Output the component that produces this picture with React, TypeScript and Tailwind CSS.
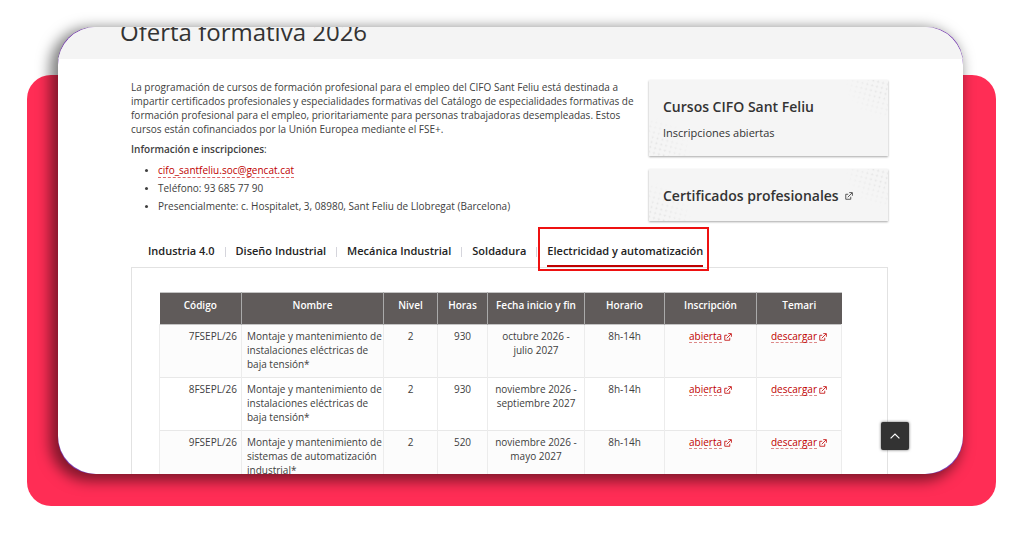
import type { ReactNode } from 'react';

type Course = {
  code: string;
  name: string;
  level: string;
  hours: string;
  dates: string;
  schedule: string;
};

const tabs = [
  'Industria 4.0',
  'Diseño Industrial',
  'Mecánica Industrial',
  'Soldadura',
  'Electricidad y automatización',
];

const columns = [
  { label: 'Código', width: 'w-[82px]' },
  { label: 'Nombre', width: 'w-[142px]' },
  { label: 'Nivel', width: 'w-[54px]' },
  { label: 'Horas', width: 'w-[50px]' },
  { label: 'Fecha inicio y fin', width: 'w-[97px]' },
  { label: 'Horario', width: 'w-[80px]' },
  { label: 'Inscripción', width: 'w-[92px]' },
  { label: 'Temari', width: 'w-[85px]' },
];

const courses: Course[] = [
  {
    code: '7FSEPL/26',
    name: 'Montaje y mantenimiento de instalaciones eléctricas de baja tensión*',
    level: '2',
    hours: '930',
    dates: 'octubre 2026 - julio 2027',
    schedule: '8h-14h',
  },
  {
    code: '8FSEPL/26',
    name: 'Montaje y mantenimiento de instalaciones eléctricas de baja tensión*',
    level: '2',
    hours: '930',
    dates: 'noviembre 2026 - septiembre 2027',
    schedule: '8h-14h',
  },
  {
    code: '9FSEPL/26',
    name: 'Montaje y mantenimiento de sistemas de automatización industrial*',
    level: '2',
    hours: '520',
    dates: 'noviembre 2026 - mayo 2027',
    schedule: '8h-14h',
  },
];

function ExternalIcon({ className }: { className: string }) {
  return (
    <svg
      aria-hidden
      viewBox="0 0 16 16"
      className={className}
      fill="none"
      stroke="currentColor"
      strokeWidth="1.6"
    >
      <path d="M6.5 4.5h-5v10h10v-5" />
      <path d="M5.5 10.5 14 2M8.5 1.2h6.3v6.3" />
    </svg>
  );
}

// Halftone dots fading out of a corner
function Dots({ id, className }: { id: string; className: string }) {
  return (
    <svg aria-hidden viewBox="0 0 48 44" className={className}>
      <defs>
        <pattern
          id={id}
          width="5"
          height="5"
          patternUnits="userSpaceOnUse"
          patternTransform="rotate(14)"
        >
          <circle cx="2.5" cy="2.5" r="0.9" fill="#e2e2e2" />
        </pattern>
        <radialGradient id={`${id}-fade`} cx="1" cy="0" r="1">
          <stop offset="0.3" stopColor="#fff" />
          <stop offset="0.9" stopColor="#000" />
        </radialGradient>
        <mask id={`${id}-mask`}>
          <rect width="48" height="44" fill={`url(#${id}-fade)`} />
        </mask>
      </defs>
      <rect width="48" height="44" fill={`url(#${id})`} mask={`url(#${id}-mask)`} />
    </svg>
  );
}

function SideCard({ id, children }: { id: string; children: ReactNode }) {
  return (
    <div className="relative overflow-hidden bg-[#f5f5f5] px-3.5 pt-[17px] pb-[15px] shadow-[0_1px_2px_rgba(0,0,0,0.35)]">
      <Dots id={`${id}-a`} className="absolute top-0 right-0 h-11 w-12" />
      <Dots id={`${id}-b`} className="absolute bottom-0 left-0 h-11 w-12 rotate-180" />
      <div className="relative">{children}</div>
    </div>
  );
}

function RowLink({ label }: { label: string }) {
  return (
    <a href="#" className="inline-flex items-center gap-0.5 text-[#c00000]">
      <span className="border-b border-dashed border-[#d88] leading-3">{label}</span>
      <ExternalIcon className="size-2" />
    </a>
  );
}

export default function App() {
  return (
    <div className="min-h-screen bg-white pt-[75px] pr-7 pb-[30px] pl-[27px] font-['Open_Sans','Noto_Sans',sans-serif] text-[#333]">
      <div className="flex flex-col rounded-3xl bg-[#ff2d55] pr-[33px] pb-8 pl-[31px]">
        <div className="relative -mt-12 rounded-[36px] bg-[#7b3fb5] shadow-[-5px_4px_14px_3px_rgba(0,0,0,0.5)]">
          <main className="h-[calc(100vh-89px)] overflow-hidden rounded-[38px] bg-white">
            <header className="flex h-8 items-end bg-[#f4f4f4] px-[62px] pb-[11px]">
              <h1 className="text-[24px] leading-8">Oferta formativa 2026</h1>
            </header>

            <div className="pr-[75px] pl-[73px]">
              <div className="flex items-start justify-between pt-[21px]">
                <div className="w-[505px] text-[10px] leading-[14px] text-[#404040]">
                  <p>
                    La programación de cursos de formación profesional para el empleo del CIFO
                    Sant Feliu está destinada a impartir certificados profesionales y
                    especialidades formativas del Catálogo de especialidades formativas de
                    formación profesional para el empleo, prioritariamente para personas
                    trabajadoras desempleadas. Estos cursos están cofinanciados por la Unión
                    Europea mediante el FSE+.
                  </p>
                  <p className="mt-1.5">
                    <strong className="font-semibold">Información e inscripciones</strong>:
                  </p>
                  <ul className="mt-[5px] list-disc pl-[27px] leading-[18px] marker:text-[8px]">
                    <li>
                      <a
                        href="mailto:cifo_santfeliu.soc@gencat.cat"
                        className="border-b border-dashed border-[#d66] text-[#c00000]"
                      >
                        cifo_santfeliu.soc@gencat.cat
                      </a>
                    </li>
                    <li>Teléfono: 93 685 77 90</li>
                    <li>Presencialmente: c. Hospitalet, 3, 08980, Sant Feliu de Llobregat (Barcelona)</li>
                  </ul>
                </div>

                <aside className="flex w-[239px] shrink-0 flex-col gap-[13px]">
                  <SideCard id="cursos">
                    <h2 className="text-[14px] leading-5 font-semibold">Cursos CIFO Sant Feliu</h2>
                    <p className="mt-2 text-[11px] leading-4">Inscripciones abiertas</p>
                  </SideCard>
                  <SideCard id="certificados">
                    <h2 className="flex items-center gap-1.5 text-[14px] leading-5 font-semibold">
                      Certificados profesionales
                      <ExternalIcon className="size-2" />
                    </h2>
                  </SideCard>
                </aside>
              </div>

              <div className="mt-3.5 flex pl-[7px]" role="tablist">
                {tabs.map((tab, i) => {
                  const active = i === tabs.length - 1;
                  return (
                    <div key={tab} className="relative flex items-start">
                      {i > 0 && <span className="mt-3 h-2.5 w-px bg-[#d5d5dc]" />}
                      <button
                        type="button"
                        role="tab"
                        aria-selected={active}
                        className="px-2.5 text-[11px] font-semibold text-[#222]"
                      >
                        <span
                          className={
                            active
                              ? 'block border-b-2 border-[#c00000] pt-2 pb-[6px] leading-4'
                              : 'block pt-2 pb-2 leading-4'
                          }
                        >
                          {tab}
                        </span>
                      </button>
                      {active && (
                        <span className="pointer-events-none absolute -top-2 right-1 -bottom-1 left-0.5 border-2 border-[#ee1111]" />
                      )}
                    </div>
                  );
                })}
              </div>

              <section className="border border-[#e2e2e2] pt-6 pl-[27px]">
                <table className="w-[682px] table-fixed border-collapse text-[10px] leading-[14px] text-[#404040]">
                  <thead>
                    <tr className="h-8 border-y border-[#c4c4c4] bg-[#605b5a] text-white">
                      {columns.map((col) => (
                        <th
                          key={col.label}
                          className={`${col.width} border-r border-[#aaa] pt-[5px] align-top font-semibold last:border-r-0`}
                        >
                          {col.label}
                        </th>
                      ))}
                    </tr>
                  </thead>
                  <tbody>
                    {courses.map((c) => (
                      <tr
                        key={c.code}
                        className="border-b border-[#e8e8e8] text-center align-top odd:bg-[#fcfcfc] *:border-x *:border-[#ececec] *:pt-1 *:pb-1.5"
                      >
                        <td className="pr-1 text-right">{c.code}</td>
                        <td className="pl-[5px] text-left">{c.name}</td>
                        <td>{c.level}</td>
                        <td>{c.hours}</td>
                        <td className="px-1">{c.dates}</td>
                        <td>{c.schedule}</td>
                        <td>
                          <RowLink label="abierta" />
                        </td>
                        <td>
                          <RowLink label="descargar" />
                        </td>
                      </tr>
                    ))}
                  </tbody>
                </table>
              </section>
            </div>
          </main>

          <button
            type="button"
            aria-label="Volver arriba"
            className="absolute right-[54px] bottom-6 flex size-7 items-center justify-center rounded-xs bg-[#333] text-white shadow-[0_0_3px_rgba(0,0,0,0.6)]"
          >
            <svg
              aria-hidden
              viewBox="0 0 10 6"
              className="h-1.5 w-2.5"
              fill="none"
              stroke="currentColor"
              strokeWidth="1.2"
            >
              <path d="M0.6 5.4 5 1 9.4 5.4" />
            </svg>
          </button>
        </div>
      </div>
    </div>
  );
}
